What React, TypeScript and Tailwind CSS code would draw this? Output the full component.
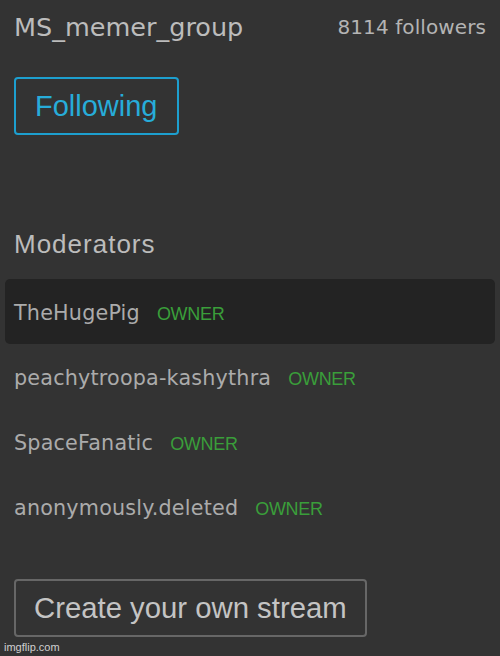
const MODS = [
  { name: "TheHugePig", role: "OWNER", active: true },
  { name: "peachytroopa-kashythra", role: "OWNER", active: false },
  { name: "SpaceFanatic", role: "OWNER", active: false },
  { name: "anonymously.deleted", role: "OWNER", active: false },
];

export default function App() {
  return (
    <div className="relative h-[656px] w-full overflow-hidden bg-[#333333] px-[5px] font-['Liberation_Sans',Arial,sans-serif]">
      <div className="flex items-start justify-between px-[9px] pt-[12px]">
        <h1 className="font-['DejaVu_Sans',sans-serif] text-[25.5px] leading-[30px] text-[#bcbcbc]">
          MS_memer_group
        </h1>
        <span className="font-['DejaVu_Sans',sans-serif] text-[20px] leading-[30px] tracking-[0.1px] text-[#b4b4b4]">
          8114 followers
        </span>
      </div>

      <div className="px-[9px] pt-[35px]">
        <button className="h-[58px] rounded-[4px] border-2 border-[#1d9fcf] px-[19px] text-[29px] leading-none text-[#27acd9]">
          Following
        </button>
      </div>

      <h2 className="mt-[94px] px-[9px] text-[26px] leading-[30px] tracking-[1px] text-[#bcbcbc]">
        Moderators
      </h2>

      <ul className="mt-[20px]">
        {MODS.map((m) => (
          <li
            key={m.name}
            className={
              m.active
                ? "flex h-[65px] items-center rounded-[5px] bg-[#232323] px-[9px] pt-[4px]"
                : "flex h-[65px] items-center px-[9px] pt-[4px]"
            }
          >
            <div className="flex items-baseline gap-[17px]">
              <span className="font-['DejaVu_Sans',sans-serif] text-[20.7px] tracking-[0.2px] text-[#ababab]">
                {m.name}
              </span>
              <span className="text-[18px] tracking-[-0.3px] text-[#3a9e3a]">
                {m.role}
              </span>
            </div>
          </li>
        ))}
      </ul>

      <div className="px-[9px] pt-[40px]">
        <button className="h-[58px] rounded-[4px] border-2 border-[#676767] px-[18px] text-[29.3px] leading-none text-[#c4c4c4]">
          Create your own stream
        </button>
      </div>

      <span className="absolute bottom-[3px] left-[4px] text-[11px] leading-none text-[#d0d0d0]">
        imgflip.com
      </span>
    </div>
  );
}
